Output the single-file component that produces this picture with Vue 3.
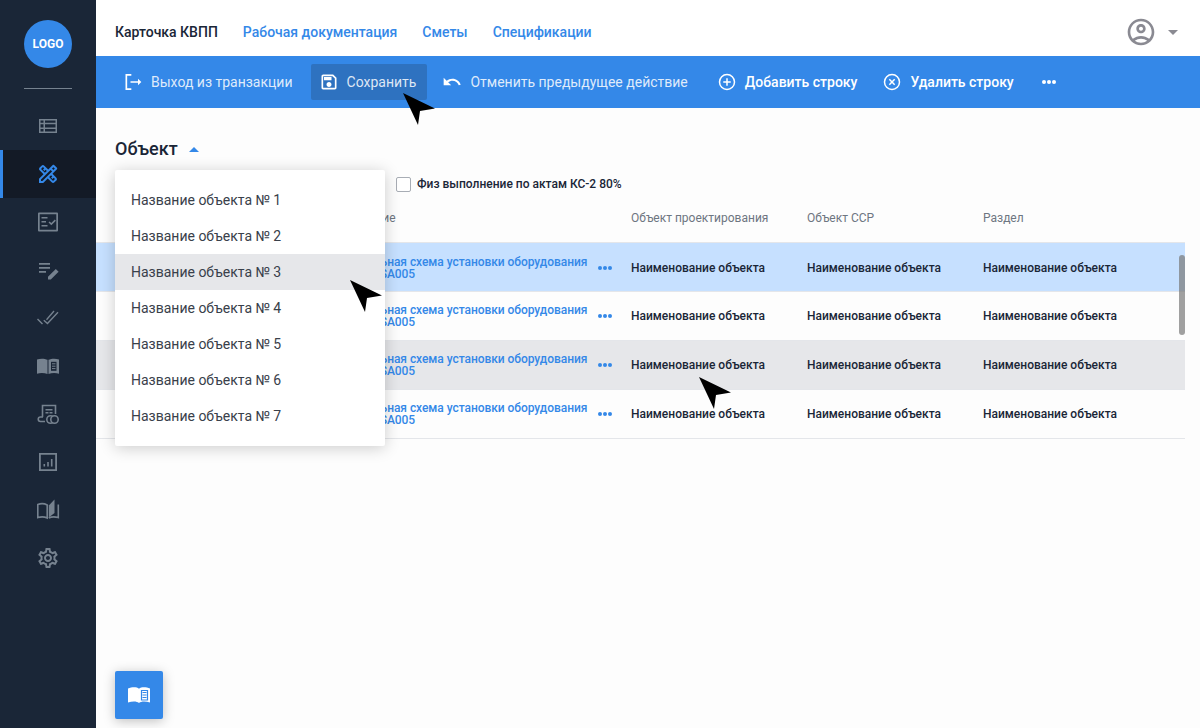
<template>
  <div class="page">
    <aside class="sidebar">
      <div class="logo">LOGO</div>
      <div class="divider"></div>
      <nav class="nav">
        <div
          v-for="(item, index) in navIcons"
          :key="index"
          class="nav-item"
          :class="{ active: index === 1 }"
        >
          <svg class="nav-icon" viewBox="0 0 24 24" v-html="item"></svg>
        </div>
      </nav>
    </aside>

    <main class="main">
      <header class="topbar">
        <a class="tab current">Карточка КВПП</a>
        <a class="tab">Рабочая документация</a>
        <a class="tab">Сметы</a>
        <a class="tab">Спецификации</a>
        <div class="user">
          <svg class="user-icon" viewBox="0 0 24 24">
            <path d="M12 2C6.48 2 2 6.48 2 12s4.48 10 10 10 10-4.48 10-10S17.52 2 12 2zM7.35 18.5C8.66 17.56 10.26 17 12 17s3.34.56 4.65 1.5c-1.31.94-2.91 1.5-4.65 1.5s-3.34-.56-4.65-1.5zm10.79-1.38C16.45 15.8 14.32 15 12 15s-4.45.8-6.14 2.12C4.7 15.73 4 13.95 4 12c0-4.42 3.58-8 8-8s8 3.58 8 8c0 1.95-.7 3.73-1.86 5.12zM12 6c-1.93 0-3.5 1.57-3.5 3.5S10.07 13 12 13s3.5-1.57 3.5-3.5S13.93 6 12 6zm0 5c-.83 0-1.5-.67-1.5-1.5S11.17 8 12 8s1.5.67 1.5 1.5S12.83 11 12 11z" />
          </svg>
          <span class="user-caret"></span>
        </div>
      </header>

      <div class="toolbar">
        <button class="tool exit">
          <svg viewBox="0 0 24 24" class="tool-icon"><path d="M10 3.500H4v17h6" fill="none" stroke="#fff" stroke-width="2" /><path d="M9 11h9V8l4 4-4 4v-3H9z" fill="#fff" /></svg>
          Выход из транзакции
        </button>
        <button class="tool saved">
          <svg viewBox="0 0 24 24" class="tool-icon"><path d="M17 3H5c-1.11 0-2 .9-2 2v14c0 1.1.89 2 2 2h14c1.1 0 2-.9 2-2V7l-4-4zm2 16H5V5h11.17L19 7.83V19zm-7-7c-1.66 0-3 1.34-3 3s1.34 3 3 3 3-1.34 3-3-1.34-3-3-3zM6 6h9v4H6z" fill="#fff" /></svg>
          Сохранить
        </button>
        <button class="tool">
          <svg viewBox="0 0 24 24" class="tool-icon"><path d="M12.5 8c-2.65 0-5.05.99-6.9 2.6L2 7v9h9l-3.62-3.62c1.39-1.16 3.16-1.88 5.12-1.88 3.54 0 6.55 2.31 7.6 5.5l2.37-.78C21.08 11.03 17.15 8 12.5 8z" fill="#fff" /></svg>
          Отменить предыдущее действие
        </button>
        <button class="tool strong add">
          <svg viewBox="0 0 24 24" class="tool-icon"><circle cx="12" cy="12" r="9" fill="none" stroke="#fff" stroke-width="1.8" /><path d="M12 7.5v9M7.5 12h9" stroke="#fff" stroke-width="1.8" /></svg>
          Добавить строку
        </button>
        <button class="tool strong">
          <svg viewBox="0 0 24 24" class="tool-icon"><circle cx="12" cy="12" r="9" fill="none" stroke="#fff" stroke-width="1.8" /><path d="M8.8 8.8l6.4 6.4M15.2 8.8l-6.4 6.4" stroke="#fff" stroke-width="1.8" /></svg>
          Удалить строку
        </button>
        <span class="more white"><i></i><i></i><i></i></span>
      </div>

      <section class="content">
        <div class="object-title">
          Объект
          <span class="title-caret"></span>
        </div>

        <label class="filter">
          <span class="checkbox"></span>
          Физ выполнение по актам КС-2 80%
        </label>

        <div class="table">
          <div class="row head">
            <div>Шифр</div>
            <div>Наименование</div>
            <div>Объект проектирования</div>
            <div>Объект ССР</div>
            <div>Раздел</div>
          </div>
          <div
            v-for="(row, index) in rows"
            :key="index"
            class="row"
            :class="row"
          >
            <div></div>
            <div class="name-cell">
              <a class="name">Принципиальная схема установки оборудования<br />ABCDEFGGGSA005</a>
              <span class="more blue"><i></i><i></i><i></i></span>
            </div>
            <div>Наименование объекта</div>
            <div>Наименование объекта</div>
            <div>Наименование объекта</div>
          </div>
        </div>
        <div class="scrollbar"></div>

        <ul class="dropdown">
          <li v-for="n in 7" :key="n" :class="{ hover: n === 3 }">Название объекта № {{ n }}</li>
        </ul>
      </section>

      <button class="help">
        <svg viewBox="0 0 24 24" class="help-icon">
          <path d="M1 5.5C3 4.6 5 4.3 7 4.3c2 0 3.8.4 5 1.4 1.2-1 3-1.4 5-1.4 2 0 4 .3 6 1.2v14c-2-.7-4-1-6-1-2 0-3.800.5-5 1.500-1.200-1-3-1.500-5-1.500-2 0-4 .3-6 1z" fill="#fff" />
          <path d="M14.500 7.500h6v9.500h-6zM15.500 9.500h4M15.500 12h4M15.500 14.500h4" fill="none" stroke="#3488e8" stroke-width="1.200" />
        </svg>
      </button>

      <svg v-for="(c, i) in cursors" :key="i" class="cursor" :class="c" viewBox="0 0 32 32">
        <path d="M0 0L32 15.500L17 18L15 32z" />
      </svg>
    </main>
  </div>
</template>

<script setup>
const rows = ['selected', '', 'hovered', '']
const cursors = ['c-save', 'c-menu', 'c-row']

const navIcons = [
  '<path d="M3 5h18v14H3zm1.500 1.500v2.200h3V6.500zm4.500 0v2.200h10.500V6.500zM4.500 10.300v3.200h3v-3.200zm4.500 0v3.200h10.500v-3.200zM4.500 15v2.500h3V15zm4.500 0v2.500h10.500V15z" fill-rule="evenodd"/>',
  '<path d="M20.97,7.27c0.39-0.39,0.39-1.02,0-1.41l-2.83-2.83c-0.39-0.39-1.02-0.39-1.41,0l-4.49,4.49L8.35,3.63c-0.78-0.78-2.05-0.78-2.83,0l-1.9,1.9c-0.78,0.78-0.78,2.05,0,2.83l3.89,3.89L3,16.76V21h4.24l4.52-4.52l3.89,3.89c0.95,0.95,2.23,0.6,2.83,0l1.9-1.9c0.78-0.78,0.78-2.05,0-2.83l-3.89-3.89L20.97,7.27z M5.04,6.94l1.89-1.9c0,0,0,0,0,0l1.27,1.27L7.02,7.5l1.41,1.41l1.19-1.19l1.2,1.2l-1.9,1.9L5.04,6.94z M16.27,14.38l-1.19,1.19l1.41,1.41l1.19-1.19l1.27,1.27l-1.9,1.9l-3.89-3.89l1.9-1.9L16.27,14.38z M6.41,19H5v-1.41l9.61-9.61l1.3,1.3l0.11,0.11L6.41,19z M16.02,6.56l1.41-1.41l1.41,1.41l-1.41,1.41L16.02,6.56z"/>',
  '<path d="M3 2.500h18a1 1 0 0 1 1 1v17a1 1 0 0 1-1 1H3a1 1 0 0 1-1-1v-17a1 1 0 0 1 1-1zm.700 1.700v15.600h16.600V4.200z" fill-rule="evenodd"/><path d="M5.500 7h6v1.500h-6zM5.500 11h4.500v1.500h-4.500zM5.500 15h6v1.500h-6z"/><path d="M12.500 12.500l1.100-1.100 1.700 1.700 3.500-3.500 1.100 1.100-4.600 4.600z"/>',
  '<path d="M3 5h11v1.800H3zM3 9h11v1.800H3zM3 13h7v1.800H3z"/><path d="M12 21.500v-2.800l7.800-7.800 2.800 2.800-7.800 7.800z"/>',
  '<path d="M18.500 5.500L11 14.300l-1-1 7.500-8.800zM22.500 6.800l-11 11.700-4.200-3.800 1-1 3.100 2.800L21.500 5.700zM1 13.500l1-1 5 5-1 1z"/>',
  '<path d="M1 5.500C4 4.300 8.500 4.300 11.500 5.800V20C8.500 18.800 4 18.800 1 19.700z"/><path d="M12.500 5.800C15.500 4.300 20 4.300 23 5.500v14.200c-3-.9-7.500-.9-10.500.3z"/><path d="M15 7.800h5.500v9H15z" fill="#1a2637"/><path d="M16 9.800h3.500M16 12.200h3.500M16 14.600h3.500" stroke="#76828f" stroke-width="1" fill="none"/>',
  '<path d="M6.500 15V3.500h13V12" fill="none" stroke="currentColor" stroke-width="1.600"/><path d="M9.500 7h7v1.500h-7zM9.500 10h3v1.500h-3zM13.500 10h3v1.500h-3z"/><path d="M7 15H4.500a2 2 0 0 0 0 4.500H9" fill="none" stroke="currentColor" stroke-width="1.600"/><circle cx="14.500" cy="17.500" r="3.700" fill="none" stroke="currentColor" stroke-width="1.600"/><circle cx="18.500" cy="17.500" r="3.700" fill="#1a2637" stroke="currentColor" stroke-width="1.600"/>',
  '<path d="M3 3h18v18H3zm1.800 1.800v14.400h14.400V4.800z" fill-rule="evenodd"/><path d="M7.500 14h1.600v2.500H7.500zM11.200 12h1.600v4.500h-1.600zM14.900 9h1.600v7.500h-1.600z"/>',
  '<path d="M1.800 6.500C4.500 5.400 8.500 5.500 11.200 7v13c-2.700-1.300-6.700-1.300-9.400-.4z" fill="none" stroke="currentColor" stroke-width="1.600"/><path d="M12.800 20c2.500-1.300 6.500-1.300 9.500-.4V6.500" fill="none" stroke="currentColor" stroke-width="1.600"/><path d="M12.800 7.500L18.500 1.500V15L12.800 19.500z"/>',
  '<path d="M19.430 12.980c.04-.32.07-.64.07-.98 0-.34-.03-.66-.07-.98l2.110-1.650c.19-.15.24-.42.12-.64l-2-3.460c-.09-.16-.26-.25-.44-.25-.06 0-.12.01-.17.03l-2.490 1c-.52-.4-1.080-.73-1.690-.98l-.38-2.650C14.460 2.180 14.250 2 14 2h-4c-.25 0-.46.18-.49.42l-.38 2.650c-.61.25-1.170.59-1.690.98l-2.490-1c-.06-.02-.12-.03-.18-.03-.17 0-.34.09-.43.25l-2 3.460c-.13.22-.07.49.12.64l2.110 1.650c-.04.32-.07.65-.07.98 0 .33.03.66.07.98l-2.110 1.650c-.19.15-.24.42-.12.64l2 3.460c.09.16.26.25.44.25.06 0 .12-.01.17-.03l2.490-1c.52.4 1.080.73 1.690.98l.38 2.650c.03.24.24.42.49.42h4c.25 0 .46-.18.49-.42l.38-2.650c.61-.25 1.170-.59 1.690-.98l2.490 1c.06.02.12.03.18.03.17 0 .34-.09.43-.25l2-3.460c.12-.22.07-.49-.12-.64l-2.110-1.650zm-1.980-1.710c.04.31.05.52.05.73 0 .21-.02.43-.05.73l-.14 1.130.89.7 1.080.84-.7 1.210-1.270-.51-1.040-.42-.9.68c-.43.32-.84.56-1.250.73l-1.060.43-.16 1.130-.2 1.350h-1.400l-.19-1.350-.16-1.130-1.060-.43c-.43-.18-.83-.41-1.230-.71l-.91-.7-1.060.43-1.270.51-.7-1.210 1.080-.84.89-.7-.14-1.130c-.03-.31-.05-.54-.05-.74s.02-.43.05-.73l.14-1.130-.89-.7-1.080-.84.7-1.210 1.270.51 1.040.42.9-.68c.43-.32.84-.56 1.250-.73l1.060-.43.16-1.130.2-1.350h1.390l.19 1.350.16 1.130 1.060.43c.43.18.83.41 1.230.71l.91.7 1.060-.43 1.270-.51.7 1.210-1.070.85-.89.7.14 1.130zM12 8c-2.210 0-4 1.790-4 4s1.790 4 4 4 4-1.790 4-4-1.790-4-4-4zm0 6c-1.100 0-2-.9-2-2s.9-2 2-2 2 .9 2 2-.9 2-2 2z"/>'
]
</script>

<style>
body {
  margin: 0;
  background: #fdfdfd;
}
</style>

<style scoped>
.page {
  display: flex;
  width: 1200px;
  height: 728px;
  overflow: hidden;
  font-family: Roboto, "Liberation Sans", sans-serif;
  background: #fdfdfd;
}

.sidebar {
  width: 96px;
  flex-shrink: 0;
  background: #1a2637;
  display: flex;
  flex-direction: column;
  align-items: center;
  padding-top: 20px;
  box-sizing: border-box;
}
.logo {
  width: 48px;
  height: 48px;
  border-radius: 50%;
  background: #3488e8;
  color: #fff;
  font-size: 12px;
  font-weight: 700;
  line-height: 48px;
  text-align: center;
}
.divider {
  width: 48px;
  height: 1px;
  background: #76828f;
  margin-top: 20px;
}
.nav {
  width: 100%;
  margin-top: 13px;
}
.nav-item {
  height: 48px;
  display: flex;
  align-items: center;
  justify-content: center;
  color: #76828f;
  fill: #76828f;
}
.nav-item.active {
  background: #131a26;
  border-left: 3px solid #3488e8;
  padding-right: 3px;
  box-sizing: border-box;
  color: #3488e8;
  fill: #3488e8;
}
.nav-icon {
  width: 24px;
  height: 24px;
}

.main {
  flex: 1;
  position: relative;
  display: flex;
  flex-direction: column;
  min-width: 0;
}

.topbar {
  height: 56px;
  box-sizing: border-box;
  display: flex;
  align-items: center;
  padding: 8px 22px 0 19px;
  gap: 25px;
  background: #fff;
}
.tab {
  font-size: 14px;
  font-weight: 500;
  color: #3488e8;
}
.tab.current {
  color: #1a2637;
}
.user {
  margin-left: auto;
  display: flex;
  align-items: center;
}
.user-icon {
  width: 32px;
  height: 32px;
  fill: #8a8a92;
}
.user-caret {
  width: 0;
  height: 0;
  margin-left: 11px;
  border: 5px solid transparent;
  border-top-color: #8a8a92;
  border-bottom: 0;
}

.toolbar {
  height: 52px;
  background: #3488e8;
  display: flex;
  align-items: center;
  padding-left: 19px;
}
.tool {
  height: 36px;
  display: flex;
  align-items: center;
  gap: 8px;
  padding: 0 11px 0 8px;
  margin-right: 8px;
  border: 0;
  background: none;
  color: rgba(255, 255, 255, 0.85);
  font-family: inherit;
  font-size: 14px;
  white-space: nowrap;
  border-radius: 2px;
}
.tool.exit {
  padding-right: 10px;
}
.tool.saved {
  background: #2e72c0;
  margin-right: 7px;
}
.tool.strong {
  padding-right: 9px;
  color: #fff;
  font-weight: 500;
}
.tool.add {
  margin-left: 2px;
}
.tool-icon {
  width: 20px;
  height: 20px;
}

.more {
  display: inline-flex;
  gap: 1px;
}
.more i {
  width: 4px;
  height: 4px;
  border-radius: 50%;
  background: #fff;
}
.more.white {
  margin-left: 11px;
}
.more.blue i {
  background: #3488e8;
}

.content {
  position: relative;
  flex: 1;
}
.object-title {
  margin: 30px 0 0 19px;
  height: 22px;
  line-height: 22px;
  font-size: 18px;
  font-weight: 500;
  color: #1a2637;
  display: flex;
  align-items: center;
}
.title-caret {
  width: 0;
  height: 0;
  margin-left: 11px;
  border: 5px solid transparent;
  border-bottom-color: #3488e8;
  border-top: 0;
}
.filter {
  margin: 16px 0 0 300px;
  height: 16px;
  display: flex;
  align-items: center;
  gap: 6px;
  font-size: 12px;
  font-weight: 500;
  color: #1a2637;
}
.checkbox {
  width: 13px;
  height: 13px;
  border: 1.500px solid #a8adb5;
  border-radius: 2px;
  background: #fff;
}

.table {
  width: 1089px;
  margin-top: 10px;
  border-bottom: 1px solid #e4e6ea;
}
.row {
  display: grid;
  grid-template-columns: 196px 320px 176px 176px 202px;
  padding-left: 19px;
  height: 49px;
  align-items: center;
  font-size: 12px;
  font-weight: 500;
  color: #1a2637;
  box-sizing: border-box;
  border-top: 1px solid #e4e6ea;
}
.row.head {
  height: 40px;
  color: #6e7681;
  font-weight: 400;
  border-top: 0;
  padding-bottom: 9px;
}
.row.selected {
  background: #c6e0ff;
  padding-top: 2px;
}
.row.hovered {
  background: #e6e7ea;
}
.name-cell {
  display: flex;
  align-items: center;
}
.name {
  width: 287px;
  color: #3488e8;
  line-height: 12px;
  letter-spacing: -0.05px;
  white-space: nowrap;
}
.scrollbar {
  position: absolute;
  left: 1083px;
  top: 147px;
  width: 6px;
  height: 80px;
  border-radius: 3px;
  background: rgba(120, 120, 120, 0.7);
}

.dropdown {
  position: absolute;
  left: 19px;
  top: 62px;
  width: 270px;
  margin: 0;
  padding: 12px 0;
  list-style: none;
  background: #fff;
  border-radius: 2px;
  box-shadow: 0 2px 16px rgba(0, 0, 0, 0.2);
}
.dropdown li {
  height: 36px;
  line-height: 36px;
  padding-left: 16px;
  font-size: 14px;
  color: #39404a;
}
.dropdown li.hover {
  background: #e6e7ea;
}

.help {
  position: absolute;
  left: 19px;
  top: 671px;
  width: 48px;
  height: 48px;
  border: 0;
  border-radius: 2px;
  background: #3488e8;
  box-shadow: 0 2px 12px rgba(0, 0, 0, 0.25);
  display: flex;
  align-items: center;
  justify-content: center;
}
.help-icon {
  width: 24px;
  height: 24px;
}

.cursor {
  position: absolute;
  width: 32px;
  height: 32px;
  fill: #000;
}
.c-save {
  left: 307px;
  top: 93px;
}
.c-menu {
  left: 254px;
  top: 280px;
}
.c-row {
  left: 603px;
  top: 377px;
}
</style>
